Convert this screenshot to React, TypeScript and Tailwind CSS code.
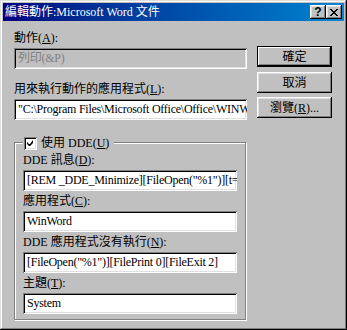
import React from "react";

const font = "font-['Liberation_Serif','Noto_Sans_CJK_TC',serif]";
const raised =
  "shadow-[inset_-1px_-1px_0_#000,inset_1px_1px_0_#fff,inset_-2px_-2px_0_#808080,inset_2px_2px_0_#dfdfdf]";
const sunken =
  "shadow-[inset_1px_1px_0_#808080,inset_-1px_-1px_0_#fff,inset_2px_2px_0_#000,inset_-2px_-2px_0_#dfdfdf]";

const Label = ({ text, k, rest = "):" }: { text: string; k: string; rest?: string }) => (
  <div className="h-[20px] leading-[20px] text-[12px] text-black whitespace-nowrap">
    {text}(<u>{k}</u>{rest}
  </div>
);

const Field = ({
  value,
  disabled = false,
  width = "w-[233px]",
}: {
  value: string;
  disabled?: boolean;
  width?: string;
}) => (
  <div
    className={`${width} h-[21px] ${sunken} ${
      disabled ? "bg-[#c0c0c0] text-[#808080]" : "bg-white text-black"
    } pl-[4px] pr-[2px] overflow-hidden whitespace-nowrap text-[12px] leading-[21px] tracking-[-0.25px]`}
  >
    {value}
  </div>
);

const Button = ({
  children,
  isDefault = false,
}: {
  children: React.ReactNode;
  isDefault?: boolean;
}) => (
  <div
    className={`w-[75px] h-[21px] flex items-center justify-center text-[12px] text-black bg-[#c0c0c0] ${
      isDefault
        ? "border border-black shadow-[inset_-1px_-1px_0_#000,inset_1px_1px_0_#fff,inset_-2px_-2px_0_#808080]"
        : raised
    }`}
  >
    {children}
  </div>
);

const TitleButton = ({ children }: { children: React.ReactNode }) => (
  <div
    className={`w-[16px] h-[14px] bg-[#c0c0c0] ${raised} flex items-center justify-center`}
  >
    {children}
  </div>
);

export default function App() {
  return (
    <div
      className={`w-[347px] h-[330px] bg-[#c0c0c0] p-[3px] ${font} shadow-[inset_-1px_-1px_0_#000,inset_1px_1px_0_#dfdfdf,inset_-2px_-2px_0_#808080,inset_2px_2px_0_#fff]`}
    >
      {/* Title bar */}
      <div className="h-[18px] flex items-center justify-between bg-gradient-to-r from-[#000080] to-[#1084d0] pl-[2px] pr-[2px]">
        <span className="text-white text-[12px] leading-[18px] whitespace-nowrap">
          編輯動作:Microsoft Word 文件
        </span>
        <div className="flex">
          <TitleButton>
            <span className="font-['Liberation_Sans',sans-serif] font-bold text-[12px] leading-none text-black">
              ?
            </span>
          </TitleButton>
          <TitleButton>
            <svg width="8" height="7" viewBox="0 0 8 7">
              <path
                d="M0 0h2v1h1v1h2V1h1V0h2v1H7v1H6v1H5v1h1v1h1v1h1v1H6V6H5V5H3v1H2v1H0V6h1V5h1V4h1V3H2V2H1V1H0z"
                fill="#000"
              />
            </svg>
          </TitleButton>
        </div>
      </div>

      {/* Body */}
      <div className="flex pl-[11px] pt-[7px]">
        {/* Left column */}
        <div className="w-[233px] flex flex-col">
          <Label text="動作" k="A" />
          <Field value="列印(&P)" disabled />
          <div className="mt-[10px]">
            <Label text="用來執行動作的應用程式" k="L" />
          </div>
          <Field value={'"C:\\Program Files\\Microsoft Office\\Office\\WINWORD.EXE"'} />

          {/* DDE group */}
          <div className="relative mt-[22px] w-[232px] h-[178px] border border-[#808080] shadow-[1px_1px_0_#fff,inset_1px_1px_0_#fff] pl-[8px] pt-[7px]">
            <div className="absolute -top-[7px] left-[8px] h-[14px] flex items-center bg-[#c0c0c0] pl-[1px] pr-[5px] gap-[4px]">
              <div
                className={`w-[13px] h-[13px] bg-white ${sunken} flex items-center justify-center`}
              >
                <svg width="7" height="7" viewBox="0 0 7 7">
                  <path d="M6 0v3L3 6H2L0 4V2l2 2h1l3-4z" fill="#000" />
                </svg>
              </div>
              <span className="text-[12px] leading-[14px] text-black whitespace-nowrap">
                使用 DDE(<u>U</u>)
              </span>
            </div>

            <Label text="DDE 訊息" k="D" />
            <Field value={'[REM _DDE_Minimize][FileOpen("%1")][t=0]'} width="w-[214px]" />
            <Label text="應用程式" k="C" />
            <Field value="WinWord" width="w-[214px]" />
            <Label text="DDE 應用程式沒有執行" k="N" />
            <Field value={'[FileOpen("%1")][FilePrint 0][FileExit 2]'} width="w-[214px]" />
            <Label text="主題" k="T" />
            <Field value="System" width="w-[214px]" />
          </div>
        </div>

        {/* Right column */}
        <div className="ml-[10px] flex flex-col pt-[18px]">
          <Button isDefault>確定</Button>
          <div className="mt-[5px]">
            <Button>取消</Button>
          </div>
          <div className="mt-[4px]">
            <Button>
              瀏覽(<u>R</u>)...
            </Button>
          </div>
        </div>
      </div>
    </div>
  );
}
